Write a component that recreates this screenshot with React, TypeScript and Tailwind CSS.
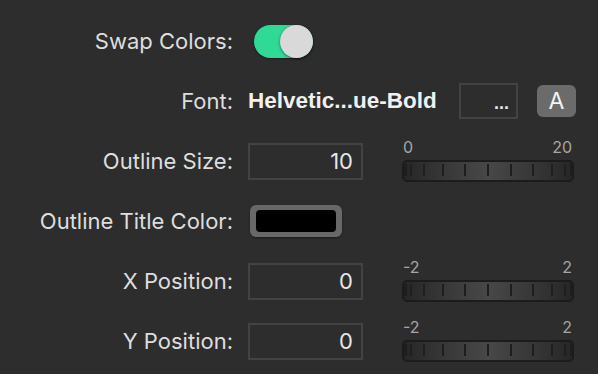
import type { ReactNode } from 'react';

const TICKS = [1, 7, 20, 39, 61, 84, 107, 129, 148, 161, 167];

function Wheel({ min, max }: { min: string; max: string }) {
  return (
    <div className="flex w-[172px] flex-col gap-[5px]">
      <div className="flex justify-between pl-[1px] pr-[2px] text-[16px] leading-[15px] text-[#a6a6a6]">
        <span>{min}</span>
        <span>{max}</span>
      </div>
      <div className="h-[22px] overflow-hidden rounded-[5px] border-2 border-[#1c1c1c] bg-[linear-gradient(90deg,#262626,#353535_20%,#484848_50%,#353535_80%,#262626)]">
        <svg width="168" height="18" viewBox="0 0 168 18" className="block">
          {TICKS.map((x, i) => (
            <rect
              key={x}
              x={x - 1}
              y={2}
              width={i === 0 || i === TICKS.length - 1 ? 3 : 2}
              height={12}
              fill="#1e1e1e"
            />
          ))}
        </svg>
      </div>
    </div>
  );
}

function NumberBox({ value }: { value: string }) {
  return (
    <div className="flex h-[37px] w-[115px] items-center justify-end border-2 border-[#434343] pr-[8px] text-[22px] text-[#e6e6e6]">
      {value}
    </div>
  );
}

function Row({ label, children }: { label: string; children: ReactNode }) {
  return (
    <div className="flex h-[60px] items-center">
      <div className="w-[233px] shrink-0 text-right text-[22px] text-[#dedede]">{label}</div>
      <div className="ml-[15px] flex items-center">{children}</div>
    </div>
  );
}

export default function App() {
  return (
    <div className="min-h-screen w-full bg-[#2d2d2d] pt-[11px] font-['Inter',sans-serif]">
      <Row label="Swap Colors:">
        <div className="ml-[6px] flex h-[33px] w-[59px] items-center justify-end rounded-full bg-[#2fd996] shadow-[0_1px_2px_rgba(0,0,0,0.4)]">
          <div className="h-[33px] w-[33px] rounded-full bg-[#d9d9d9] shadow-[0_1px_3px_rgba(0,0,0,0.45)]" />
        </div>
      </Row>
      <Row label="Font:">
        <span className="w-[211px] font-['Liberation_Sans',sans-serif] text-[22.5px] font-bold text-[#f0f0f0]">
          Helvetic...ue-Bold
        </span>
        <div className="flex h-[36px] w-[59px] items-end justify-end border-2 border-[#434343] pb-[5px] pr-[7px] font-['Liberation_Sans',sans-serif] text-[18px] font-bold leading-none text-[#e6e6e6]">
          ...
        </div>
        <button className="ml-[19px] flex h-[32px] w-[39px] items-center justify-center rounded-[6px] bg-[#6b6b6b] text-[23px] text-[#f4f4f4]">
          A
        </button>
      </Row>
      <Row label="Outline Size:">
        <NumberBox value="10" />
        <div className="ml-[39px]">
          <Wheel min="0" max="20" />
        </div>
      </Row>
      <Row label="Outline Title Color:">
        <div className="ml-[2px] h-[32px] w-[92px] rounded-[6px] bg-[#686868] px-[6px] py-[5px] shadow-[0_1px_2px_rgba(0,0,0,0.4)]">
          <div className="h-full w-full rounded-[4px] bg-black" />
        </div>
      </Row>
      <Row label="X Position:">
        <NumberBox value="0" />
        <div className="ml-[39px]">
          <Wheel min="-2" max="2" />
        </div>
      </Row>
      <Row label="Y Position:">
        <NumberBox value="0" />
        <div className="ml-[39px]">
          <Wheel min="-2" max="2" />
        </div>
      </Row>
    </div>
  );
}
